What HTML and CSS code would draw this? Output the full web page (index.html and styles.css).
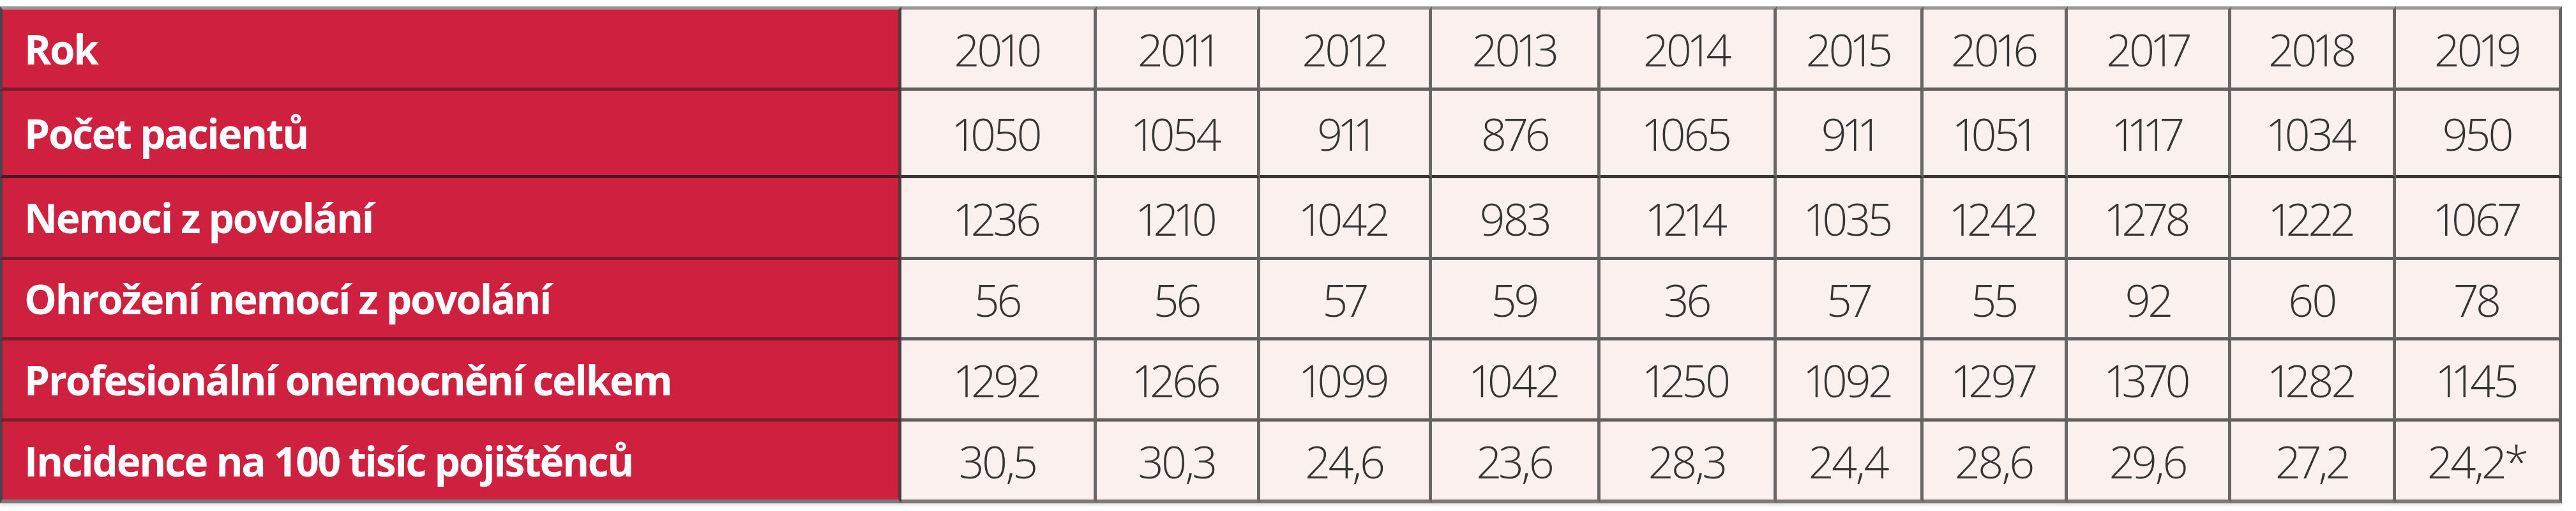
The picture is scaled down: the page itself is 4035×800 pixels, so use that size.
FILE: index.html
```html
<!DOCTYPE html>
<html lang="cs">
<head>
<meta charset="utf-8">
<title>Profesionální onemocnění 2010–2019</title>
<link rel="stylesheet" href="styles.css">
</head>
<body>
<div class="page">
  <div class="grid">
    <div class="lab first r2x">Rok</div>
    <div class="num first">2010</div><div class="num first">2011</div><div class="num first">2012</div><div class="num first">2013</div><div class="num first">2014</div><div class="num first">2015</div><div class="num first">2016</div><div class="num first">2017</div><div class="num first">2018</div><div class="num first">2019</div>

    <div class="lab dark">Počet pacientů</div>
    <div class="num dark">1050</div><div class="num dark">1054</div><div class="num dark">911</div><div class="num dark">876</div><div class="num dark">1065</div><div class="num dark">911</div><div class="num dark">1051</div><div class="num dark">1117</div><div class="num dark">1034</div><div class="num dark">950</div>

    <div class="lab">Nemoci z povolání</div>
    <div class="num">1236</div><div class="num">1210</div><div class="num">1042</div><div class="num">983</div><div class="num">1214</div><div class="num">1035</div><div class="num">1242</div><div class="num">1278</div><div class="num">1222</div><div class="num">1067</div>

    <div class="lab">Ohrožení nemocí z povolání</div>
    <div class="num">56</div><div class="num">56</div><div class="num">57</div><div class="num">59</div><div class="num">36</div><div class="num">57</div><div class="num">55</div><div class="num">92</div><div class="num">60</div><div class="num">78</div>

    <div class="lab">Profesionální onemocnění celkem</div>
    <div class="num">1292</div><div class="num">1266</div><div class="num">1099</div><div class="num">1042</div><div class="num">1250</div><div class="num">1092</div><div class="num">1297</div><div class="num">1370</div><div class="num">1282</div><div class="num">1145</div>

    <div class="lab last">Incidence na 100 tisíc pojištěnců</div>
    <div class="num last">30,5</div><div class="num last">30,3</div><div class="num last">24,6</div><div class="num last">23,6</div><div class="num last">28,3</div><div class="num last">24,4</div><div class="num last">28,6</div><div class="num last">29,6</div><div class="num last">27,2</div><div class="num last">24,2*</div>
  </div>
</div>
</body>
</html>
```

FILE: styles.css
```css
html, body {
  margin: 0;
  padding: 0;
  background: #ffffff;
}

.page {
  padding-top: 10px;
  width: 4035px;
  height: 790px;
}

.grid {
  display: grid;
  width: 4013px;
  grid-template-columns: 1412px 306px 256px 269px 264px 276px 230px 226px 256px 258px 260px;
  grid-template-rows: 132px 137px 128px 126px 127px 128px;
  box-shadow: 0 3px 4px rgba(0, 0, 0, 0.12);
}

.lab, .num {
  box-sizing: border-box;
  display: flex;
  align-items: center;
  border-bottom: 5px solid #635e5e;
  border-right: 5px solid #6a6666;
}

.lab {
  background: #d02040;
  color: #ffffff;
  font-family: "Open Sans", "Lato", "Liberation Sans", sans-serif;
  font-weight: 700;
  font-size: 64px;
  letter-spacing: -2.3px;
  padding-left: 34px;
  border-left: 4px solid #4a4446;
  border-right-color: #4f3a3f;
  border-bottom-color: #7a1c2b;
  white-space: nowrap;
}

.num {
  background: #faf1ee;
  color: #363434;
  justify-content: center;
  font-family: "Open Sans", "Lato", "Liberation Sans", sans-serif;
  font-weight: 300;
  font-size: 70px;
  letter-spacing: -3px;
  font-variant-numeric: proportional-nums;
  padding-top: 2px;
}

.first {
  border-top: 5px solid #9a9696;
}

.dark.num {
  border-bottom-color: #3a3535;
}

.dark.lab {
  border-bottom-color: #4a1b24;
}

.last {
  border-bottom: 6px solid #7e7979;
}
```
